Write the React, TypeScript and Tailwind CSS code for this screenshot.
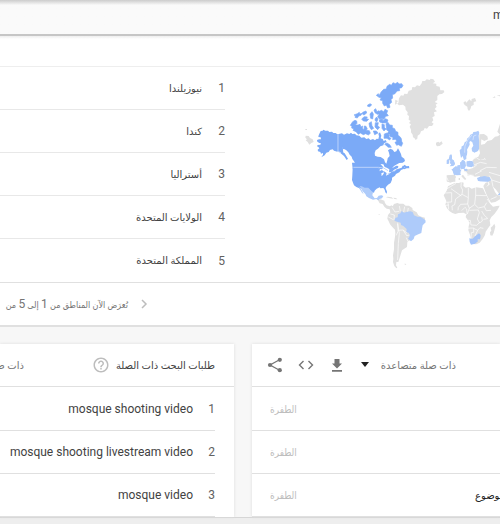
import React from "react";

const regions = ["نيوزيلندا", "كندا", "أستراليا", "الولايات المتحدة", "المملكة المتحدة"];
const queries = ["mosque shooting video", "mosque shooting livestream video", "mosque video"];
const topics = ["", "", "موضوع"];

function WorldMap() {
  return (
    <svg
      viewBox="300 70 200 205"
      className="block h-[205px] w-[200px] shrink-0"
      role="img"
      aria-label="الاهتمام حسب المنطقة"
      strokeLinejoin="round"
    >
      {/* North America */}
      <g transform="translate(300 70) scale(0.33333)">
        <path fill="#7baaf7" d="M62 183l6-1 2-3 6 3 8 0 4 4 8-1 4 4 7 0 5 4v52l-10-3-4-4-8 2-4 6-7 2-5 8-10 6 5-8 0-5-6 2-2-5-7-2-1-5 5-4-3-4-4-2 2-4 8-1 2-4-5-1-6-4-1-5 6-2 6 0-1-6-7-1 1-5z" />
        <path fill="#7baaf7" d="M116 192l10-2 6 4 9-4 7 2 5-4 4 4 8-1 4 5 9 1 6 6 9-1 6 5 7-2 5 5 8-3 6 4 5-5 5 1 2-8-2-8 5-4 4 10-2 8 6 2 3 6 6-3 3 6-8 4-2 6-9 3-7 7-7 5-3 8 1 8 8 3 9 1 10 7 3 9 4 4 3-10 1-6 6-7-2-10-3-7 7-5 7 3 5 7 6-2 5-9 5 9 4 8 2 8 8 6 2 7-7 5-10 1-7 4-9 5-6 7 13-8 6 1-1 6-12 5-5 6-10 2 1-9-8-5-6-2-4-8-12-1-72-1-4-7-5-7-2-7-6-6-4-7-6-6-5-3-6-1z" />
        <path fill="#7baaf7" d="M110 192l14 0 6 58-20-7zM156 278h82l12 14-4 6-10-2h-78z" />
        <path fill="#7baaf7" d="M122 244l12 6 10 16-4 4-8-12-10-8zM313 284l7 5 7-1 1 7-8 0-7 3-3-3 6-4-5-2z" />
        <g fill="#7baaf7" stroke="#7baaf7" strokeWidth="2">
          <path d="M158 155l7-4 5 2 1 7-5 5 8 0 6-2 3 8 5-3-1 7 5 4 1-11 5 1 4 8-4 4 10 1 3 8-6 5-8-4-7 3-9-5-6 4-7-8-9-4 3-4-7-3 1-5-5-3zM172 131l6-4 1 5 7-2-3 6-7 2-4 6-7-2 2-5-5-2zM188 127l10-4 2 6-8 6-5-3zM185 147l8-7 9 1-3 5 7 2-6 6-10-1zM210 132l6-7 4 7-2 15-6-2zM203 105l8-4 4 4-6 5-6-1zM222 120l5-4 4 9 6-3 3 9-8 2-7-5zM207 160l7-5 2 12 5 8-7 4-5-8zM226 158l9 0-2 10 6 4-6 7-8-8zM220 183l9 0 5 6-10 5z" />
          <path d="M229 76l6-5 2 6 7-12 7-7 8-1 2-8 8-6 5 3 5-8 7 3 7-4 4 5 8-1 4 6-5 7-6 0 1 8-8 1-6 8-8 3 1 10-5 5 2 8-7 6 2 9-7 2-4-9-6 3-5-8 0-8-8-2 4-7-7-1z" />
          <path d="M235 126l9-5 7 4 4-7 8 4-3 8 5 7-8 2-5 9-6-3-7 3-6-8 4-7zM225 147l5-6 4 6-3 8-5-2zM238 150l9-4 2 6 8-6 7 4-3 8-14 1-8-3zM246 162l7 2 0 8 5 5-6 6-6-8zM258 161l6-4 5 8 8 1 0 7 7 3 3 8 7 3 0 9 6 4 4 6 1 8 3 6-4 9-9-5-5 2-5-9 6-3-5-6-8 1 1-7-8-2-2-7-7-2 4-7-6-4zM253 192l8-3 7 6-1 7 6 3-4 5-8-5-9 0zM254 222l7-3 8 5 5 8-9 0-5-4z" />
        </g>
        <path fill="none" stroke="#bcd3fb" strokeWidth="3" d="M114 192v52l8 4M160 292h75l16 2 13 8M263 312l13-4 15-10" />
        <path fill="#e0e0e0" d="M17 197l9 1 4 6 8 4 3 8-7 3-6 5-5-8-6-5 4-3-5-5zM16 177h5v3h-5z" />
      </g>

      {/* Greenland, Scandinavia and eastern Europe */}
      <g transform="translate(400 70) scale(0.33333)">
        <path fill="#e0e0e0" d="M-15 104l10-5 2-14 6-9 7 1 3-6 9 1 4-10 9-2 2-9 8 1 6-6 8 2 6-8 2-7 8 0 5-5 9 2 3-4 8 2 5 7-7 5 11 1 0 7 10 2 2 11 10 0 2 5-7 6-8 1-6 5 0 12-8 6 9 4-6 4 3 6-6 7 7 7-9 3 2 11-7 4 3 9-5 6 6 4-5 7-9 0-6 8-7-2-3 7-8 3-3 8-7 5-1 9-5 4-4-6-4-2-1-8-5-7 0-8-4-9 4-7-6-4 5-6-6-4 1-11-5-4 1-7-6-8-1-9-7-6-12 2-8-7 5-6-8-4zM108 218l7-3 3 3 7-4 3 7-9 7-8 1-3-5zM190 98l6-5 3 5 9-10 6 6 1-7 10-3 4 10-8 2 0 9-7 3-3 10-4 5-4-5-1-8-8-5zM277 83l8-4 1 4zM290 77l10-2v4z" />
        <path fill="#aecbfa" d="M180 249l-1-8 6-6-1-5 7-4 3-9 6-4 1-7 7-6 3-6 7-3 2-5 8-1 7-3 3 6-2 9 1 12 2 8-1 9 1 7-5 10-10 5-8-4-1-9 5-8-3-10-5-4-4 3 1 8-4 8-4 7 1 6-1 9-2 5 0 8-7 4-4-13-5 6z" />
        <path fill="none" stroke="#e1ebfd" strokeWidth="2" d="M194 248l1-20 8-18 13-15M219 210l2-12 8-3" />
        <path fill="#e0e0e0" d="M238 193l14-1 10 7 2 9-11 5-9-5-1 16 11-2 8-9 13-3 10-10 8-1 17-11v142H244l-5-12-14 2-13-5-9 2-3-9-9-4 4-7 12 1 12-4 2-14-4-7 6-9 12-4 5-10-3-15zM300 161l-5 16-3 8 8 9zM142 317l15-2 9 5v15h-24z" />
        <path fill="#aecbfa" d="M149 255l5-2 2 4 0 10 6 5 3 11-5 5-11 1 5-6-5-3 2-7-5-5zM141 269l5-2 2 5-1 8-6 2zM158 296l8-1 6-6 7 7 5 6-3 9 2 4-13 1-8-4-3-10-5-3zM172 286l8-1 0-8 4-2 2-5 6 1 4 6-1 12-1 6-14 4-7-5zM199 277l10-5 11 3 1 13-7 3-14-2zM238 322l15-4 14 3 4 8-8 5h-24l-4-6z" />
        <path fill="none" stroke="#fff" strokeWidth="2" d="M217 268l12-5 12 8 11-2M220 293l13-11 17 7 14-4 16 8 20-8M253 264l7 14-7 10M180 306l18-1 6 10 17 1M239 246l-14 3M182 299v-22M199 275v22" />
      </g>

      {/* United States, Latin America, Africa and Arabia */}
      <g transform="translate(340 160) scale(0.33333)">
        <path fill="#7baaf7" d="M38 24h76l7 5-4 5 9-4 7 6-9 4 1 9 6-8 1-7 8 5-2 8 10-5 7-7 9-1 7-6 14-5 3-6 8 0-5 10-8 3-5 7-10 5-3 5-9 6 0 6-4 10-8 5-6 7-1 4 4 10-1 6-4-4-2-8-4-5-9 1-2-3-9 4-6 6-2 6-8-2-5-7-7-2-6 3-6-4-12-1-9-4-7-5-3-8-3-8 1-14z" />
        <path fill="#aecbfa" d="M59 78l6 1 9 4 11 0 7 8 7 6-2 9 7 9 7-1 5-7 8-1 6 2-4 7-7 2-3 5-7-5-10 2-12-5-8-5-3-7-8-8-5-9zM56 79l4 5 6 8 5 11-5-5-5-8-4-5z" />
        <path fill="#e0e0e0" d="M114 121l7-3 12 4 2 7 5 7 10 3 4-3 4 3 4-7 10-3 6 2 12 0 7 6 10 0 10 7 1 6 12 7 5 9 9 4 11 3-1 9-7 6-3 11-4 14-8 5-12 7-5 11-5 6-7-2-3 8-8 3-2 8-8 1-1 8-6 6 0 9-3 7 1 9-4 8-1 9 4 7-3 2-6-7-4-12 1-10-1-10 3-18 0-20 3-18 1-11-1-10-8-8-7-8-4-9-4-8 2-11 7-8-2-9-9-2-7-6-5-8-9-2zM143 110l12 2 5 4-10-1-12-3zM160 113l8 1 4 4-9-1zM116 163h3v2h-3zM193 311l4 0 2 3-4 0z" />
        <path fill="#e0e0e0" d="M172 200l18 8 15 16 3 16-6 7-1 14-15 10-6 19-5 16-7-1-3-36z" />
        <path fill="#aecbfa" d="M163 180l4-7 6-1 1-9 7-3 4-7 7 5 9-3 10-1 7 2 4 10 10 4 10 1 14 9 1 7-9 9-2 10-2 13-9 4-11 5-3 9-8 7-9-8 5-8-2-9-8-3 1-9-10-9-7-3-1-7-11-3-6-2z" />
        <path fill="#e0e0e0" d="M320 46l25-2 3 8-5 5-4 8-8 3-11-4zM311 106l9-14 4-13 9-5 11-5 13 0 7-3 7 2-1 10 7 5 10-2 8 5 14-4 20 3 6 13 6 11 5 12 6 12 7 7 11-2 9-1-5 10-10 14-10 10-5 10 2 14-8 11-6 9-2 10-7 12-9 11-10 5-11-1-5-13-3-15-5-13 1-12 3-11-8-11-4-6 2-8-8-5-15 1-10 3-9-3-8-5-8-9-5-11 3-11zM452 203l6-5 5-7 3 9-5 19-4 8-6-1-1-9 4-5zM403 0h77v105l-13-17-7-7-5 6-7-7-2-14-5-2-7-8 11-8-5-5-13-1-12 3-5-8 8-10zM436 69l7-3 3 10 7 1 7 7 5 12 6 8 9 3v11l-14 8-13 2-7-12-7-14-5-13-4-11zM364 48l5-4 5 7 5 6-4 3-7-7zM356 54h4v6h-4z" />
        <path fill="#a4c4fa" d="M388 235l10 1 8-8 11-8 5 5-1 10-7 9-9 7-12 3-4-8z" />
        <path fill="#e0e0e0" d="M414 237l5 2-3 4-4-2z" />
        <path fill="#aecbfa" d="M320 1h6v11h-6zM333 0h7l5 12-10 3zM340 24l8-6 8 7 5 8-6 10-13 2-5-15zM360 8l7-5 8 1 3 13-5 10-12-2zM380 4l16-1 5 13-7 6-14-4zM371 27l10-1 2 6-8 1zM411 54l9-4 13 2 16-1 4 10-9 4-30-2zM473 104l7-6v8z" />
        <g fill="none" stroke="#fff" strokeWidth="2">
          <path d="M318 88l15-9 15-9M315 99l20-1v28l-18 1M333 86l31 22M364 66l-1 15 5 9-2 13-19 14M366 103l19 10 0-30M407 80v26l34 1M385 113l-2 19-21 1-7 9-1 9M347 117l-3 17-8 4 1 13M324 127l2 21M309 137l18-2M407 106l-3 27 11 11 18-4 7-12M383 132l5 13 15-11M365 152l10-10 5 5 1 14-8 8M388 145l-6 17M388 151l27-1 3 8-6 19 7 12M377 181l14 0 2 14 17 1 9-9M375 205l26-1 0 13-7 1-1 18M401 205l12 6 7-8 10 2M413 211l-8 17M425 153l8 13 11 10M433 140l6 12 14-1M419 189l8-6-2-13M430 178l12-2M441 117l13 17" />
          <path d="M156 142l9 14 13-2M178 138l3 16M194 140l-3 16M205 144l-2 11M151 162l12 3-1 15M145 171l15 8M173 188l1 26-5 12M174 211l15-1 11 8M173 192l5 28-3 30-2 50M190 211l10 16 9-2M199 233l5 12" />
          <path d="M402 15l19-8 19 4M420 32l20-10 30 1M405 43l20-10M448 47l7 13 4 20M455 60l25 8M440 79l10-8M447 37l33 10M452 118l18-8M320 52l5 11" />
        </g>
      </g>
    </svg>
  );
}

function ShareIcon() {
  return (
    <svg viewBox="0 0 16 16" className="size-4" fill="#757575" aria-hidden="true">
      <path d="M13 2.500L3 8l10 5.500" fill="none" stroke="#757575" strokeWidth="1.300" />
      <circle cx="12.800" cy="2.800" r="2.100" />
      <circle cx="3" cy="8" r="2.100" />
      <circle cx="12.800" cy="13.200" r="2.100" />
    </svg>
  );
}

function CodeIcon() {
  return (
    <svg viewBox="0 0 16 16" className="size-4" fill="none" stroke="#757575" strokeWidth="1.400" aria-hidden="true">
      <path d="M5.500 4L1.500 8l4 4M10.500 4l4 4-4 4" />
    </svg>
  );
}

function DownloadIcon() {
  return (
    <svg viewBox="0 0 16 16" className="size-4" fill="#757575" aria-hidden="true">
      <path d="M5.500 2h5v4.500H13L8 11.500 3 6.500h2.500zM3 13h10v1.700H3z" />
    </svg>
  );
}

function SortSelect() {
  return (
    <select
      aria-label="ترتيب"
      defaultValue="rising"
      className="w-[86px] shrink-0 cursor-pointer appearance-none bg-transparent text-right text-[10px] text-[#757575] outline-none"
    >
      <option value="rising">ذات صلة متصاعدة</option>
    </select>
  );
}

export default function App() {
  return (
    <div
      lang="ar"
      className="w-full overflow-hidden bg-[#f7f7f7] font-[Roboto,'DejaVu_Sans',sans-serif] text-[#424242]"
    >
      <header className="flex h-9 items-center justify-end overflow-hidden border-b-2 border-[#c6c6c6] bg-linear-to-b from-[#cccccc] to-[#fafafa] to-15% pb-1 text-xs">
        <span className="w-[7px] whitespace-nowrap">m</span>
      </header>

      <section className="border-b-2 border-[#e0e0e0] bg-white">
        <div className="h-[30px] bg-linear-to-b from-[#eeeeee] to-white to-10%" />
        <div className="flex justify-between border-t border-[#eeeeee]">
          <ol dir="rtl" className="w-[45%]">
            {regions.map((name, i) => (
              <li
                key={name}
                className="flex h-[43px] items-center border-b border-[#e8e8e8] text-[10px] last:border-0"
              >
                <span className="w-[23px] text-xs text-[#616161]">{i + 1}</span>
                <span className="whitespace-nowrap">{name}</span>
              </li>
            ))}
          </ol>
          <div className="flex items-start pt-[3px]">
            <WorldMap />
          </div>
        </div>
        <footer className="flex h-[43px] border-t border-[#e0e0e0]">
          <div
            dir="rtl"
            className="flex w-[150px] items-center gap-3 font-[Roboto,'DejaVu_Sans_Condensed',sans-serif] text-[9px] text-[#757575]"
          >
            <button type="button" aria-label="السابق" className="shrink-0">
              <svg viewBox="0 0 10 10" className="size-[10px]" fill="none" stroke="#bdbdbd" strokeWidth="1.500">
                <path d="M2 1l4 4-4 4" />
              </svg>
            </button>
            <span className="whitespace-nowrap">
              تُعرَض الآن المناطق من <span className="text-xs">1</span> إلى <span className="text-xs">5</span> من
            </span>
          </div>
        </footer>
      </section>

      <main className="flex gap-[18px] pt-[17px]">
        <section className="w-[234px] shrink-0 overflow-hidden bg-white shadow-[0_0_3px_#dddddd]">
          <div dir="rtl" className="flex h-[43px] items-center border-b border-[#e0e0e0] pr-[19px]">
            <h2 className="shrink-0 whitespace-nowrap text-[10px]">طلبات البحث ذات الصلة</h2>
            <button type="button" aria-label="مساعدة" className="mr-[6px] shrink-0">
              <svg viewBox="0 0 24 24" className="size-[18px]" fill="#bdbdbd" aria-hidden="true">
                <path d="M11 18h2v-2h-2v2zm1-16C6.480 2 2 6.480 2 12s4.480 10 10 10 10-4.480 10-10S17.520 2 12 2zm0 18c-4.410 0-8-3.590-8-8s3.590-8 8-8 8 3.590 8 8-3.590 8-8 8zm0-14c-2.210 0-4 1.790-4 4h2c0-1.100.900-2 2-2s2 .900 2 2c0 2-3 1.750-3 5h2c0-2.250 3-2.500 3-5 0-2.210-1.790-4-4-4z" />
              </svg>
            </button>
            <div className="mr-[68px] flex">
              <SortSelect />
            </div>
          </div>
          <ol dir="rtl" className="pt-px pr-[19px]">
            {queries.map((q, i) => (
              <li key={q} className="flex h-[43px] items-center border-b border-[#e0e0e0] text-xs">
                <span className="w-[22px] shrink-0 text-[#616161]">{i + 1}</span>
                <span className="whitespace-nowrap">{q}</span>
              </li>
            ))}
          </ol>
        </section>

        <section className="min-w-0 grow overflow-hidden bg-white shadow-[0_0_3px_#dddddd]">
          <div className="flex h-[43px] items-center gap-[15px] border-b border-[#e0e0e0] pl-[15px]">
            <button type="button" aria-label="مشاركة"><ShareIcon /></button>
            <button type="button" aria-label="تضمين"><CodeIcon /></button>
            <button type="button" aria-label="تنزيل"><DownloadIcon /></button>
            <div className="flex items-center">
              <svg viewBox="0 0 10 6" className="h-[6px] w-[10px]" fill="#212121" aria-hidden="true">
                <path d="M1 0h8L5 5z" />
              </svg>
              <SortSelect />
            </div>
          </div>
          <ul className="pt-px">
            {topics.map((t, i) => (
              <li
                key={i}
                className="flex h-[43px] items-center justify-between border-b border-[#e0e0e0] pl-[18px] text-[10px]"
              >
                <span className="font-['DejaVu_Sans_Condensed',sans-serif] text-[#bdbdbd]">الطفرة</span>
                <span className="w-[25px] whitespace-nowrap text-[#212121]">{t}</span>
              </li>
            ))}
          </ul>
        </section>
      </main>
      <div className="h-[7px] border-t border-[#d6d6d6] bg-[#eeeeee]" />
    </div>
  );
}
